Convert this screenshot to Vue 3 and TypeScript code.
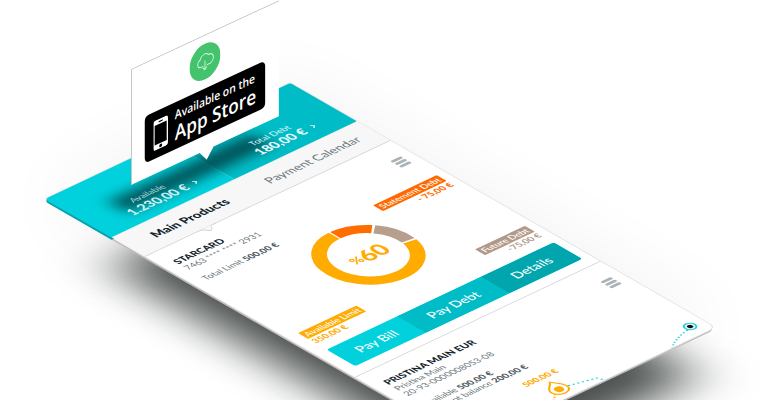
<script setup lang="ts">
interface Balance {
  label: string
  amount: string
}

interface Segment {
  start: number
  sweep: number
  tone: string
}

const balances: Balance[] = [
  { label: 'Available', amount: '1.230,00 €' },
  { label: 'Total Debt', amount: '180,00 €' },
]

// Angles in degrees, clockwise from the top of the ring
const segments: Segment[] = [
  { start: 1, sweep: 46, tone: 'statement' },
  { start: 50, sweep: 47, tone: 'future' },
  { start: 100, sweep: 259, tone: 'available' },
]
</script>

<template>
  <main class="stage">
    <div class="ground"><div class="ground-shadow"></div></div>
    <article class="screen">
      <header class="balances">
        <section v-for="b in balances" :key="b.label" class="balance">
          <span class="balance-label">{{ b.label }}</span>
          <div class="balance-row">
            <strong class="balance-amount">{{ b.amount }}</strong>
            <button class="chevron" type="button" :aria-label="b.label">
              <svg viewBox="0 0 6 10" width="6" height="10"><path d="M1.2 2.2 4 5 1.200 7.8" /></svg>
            </button>
          </div>
        </section>
        <div class="popup-shadow"></div>
      </header>

      <nav class="tabs">
        <button type="button" class="tab active">Main Products</button>
        <button type="button" class="tab">Payment Calendar</button>
        <svg class="notch" viewBox="0 0 26 9" width="26" height="9">
          <path class="notch-fill" d="M0 0V.5H5C9 .5 10 7.500 13 7.500S17 .5 21 .5H26V0Z" />
          <path class="notch-edge" d="M0 .5H5C9 .5 10 7.500 13 7.500S17 .5 21 .5H26" />
        </svg>
      </nav>

      <section class="product">
        <div class="summary">
          <div class="details">
            <h2>STARCARD</h2>
            <p>7463 **** **** 2931</p>
            <p class="spaced">Total Limit <b>500,00 €</b></p>
          </div>
          <button class="menu" type="button" aria-label="Menu"><i></i><i></i><i></i></button>
        </div>

        <div class="usage">
          <div class="figure figure-available">
            <span class="tag">Available Limit</span>
            <b>350,00 €</b>
          </div>
          <div class="donut">
            <svg viewBox="0 0 110 110" width="110" height="110">
              <circle
                v-for="s in segments"
                :key="s.tone"
                :class="s.tone"
                cx="55"
                cy="55"
                r="47"
                pathLength="360"
                :stroke-dasharray="`${s.sweep} ${360 - s.sweep}`"
                :transform="`rotate(${s.start - 90} 55 55)`"
              />
            </svg>
            <div class="percent"><small>%</small>60</div>
          </div>
          <div class="right-figures">
            <div class="figure figure-statement">
              <span class="tag">Statement Debt</span>
              <b>- 75,00 €</b>
            </div>
            <div class="figure figure-future">
              <span class="tag">Future Debt</span>
              <span>-75,00 €</span>
            </div>
          </div>
        </div>

        <div class="actions">
          <button type="button">Pay Bill</button>
          <button type="button">Pay Debt</button>
          <button type="button">Details</button>
        </div>
      </section>

      <section class="product account">
        <div class="summary">
          <div class="details">
            <h2>PRISTINA MAIN EUR</h2>
            <p>Pristina Main</p>
            <p>20-93-0000008053-08</p>
            <p class="spaced">Available <b>500,00 €</b></p>
            <p>Current balance <b>200,00 €</b></p>
          </div>
          <button class="menu" type="button" aria-label="Menu"><i></i><i></i><i></i></button>
        </div>
        <svg class="history" viewBox="0 0 320 62" width="320" height="62">
          <path class="dots past" d="M122 50 108 62" />
          <path class="dots" d="M142 47 172 55 175 62" />
          <path class="dots" d="M297 48 Q276 52 264 62" />
          <path class="pin" d="M133 31C136 36 141 39 141 46A10 9 0 1 1 121 46C121 39 130 36 133 31Z" />
          <circle class="pin-core" cx="131" cy="46" r="5" />
          <circle class="point" cx="303" cy="45" r="6" />
          <circle class="point-core" cx="303" cy="45" r="3" />
          <text x="110" y="23">500,00 €</text>
        </svg>
      </section>
    </article>

    <aside class="popup">
      <svg class="panel" viewBox="0 0 172 127" width="172" height="127">
        <path class="panel-fill" d="M0 0H172V116H96L88 126 80 116H0Z" />
        <path class="panel-edge" d="M.5 116V.5H172" />
      </svg>
      <svg class="download" viewBox="0 0 36 36" width="36" height="36">
        <circle cx="18" cy="18" r="18" />
        <path d="M16 22H13A4 4 0 0 1 12.500 14.200A5.300 5.300 0 0 1 22 12.500A4.700 4.700 0 0 1 24 22H20M18 17V26M15.500 23.500 18 26 20.500 23.500" />
      </svg>
      <a class="store" href="#">
        <svg viewBox="0 0 17 30" width="17" height="30">
          <rect width="17" height="30" rx="2.500" fill="#fff" />
          <rect x="1.500" y="5" width="14" height="19.500" fill="#000" />
          <rect x="6" y="2" width="5" height="1.200" rx=".6" fill="#000" />
          <circle cx="8.500" cy="27.200" r="1.700" fill="#000" />
        </svg>
        <span class="store-text">
          <span>Available on the</span>
          <strong>App Store</strong>
        </span>
      </a>
    </aside>
  </main>
</template>

<style>
body {
  margin: 0;
  background: #fff;
}
</style>

<style scoped>
.stage {
  position: relative;
  min-height: 100vh;
  overflow: hidden;
  background: #fff;
  font-family: Lato, 'Liberation Sans', sans-serif;
  font-size: 11px;
  line-height: 13px;
  color: #6b777c;
}

button {
  margin: 0;
  padding: 0;
  border: 0;
  background: none;
  font: inherit;
  color: inherit;
}

/* The phone screen and its shadow share one isometric plane */
.screen,
.ground {
  position: absolute;
  top: 199px;
  left: 45px;
  width: 320px;
  transform-origin: 0 0;
  transform: matrix(0.766, -0.3625, 0.717, 0.412, 0, 0);
}

.ground {
  height: 597px;
  box-shadow: 0 0 90px rgba(0, 0, 0, 0.06);
}

.ground-shadow {
  width: 284px;
  height: 515px;
  margin: 132px 0 0 -38px;
  background: #4a504e;
  filter: blur(29px);
}

.screen {
  border-radius: 4px 2px 8px 8px;
  background: #fff;
  box-shadow:
    0 0 0 1px #dedede,
    -1px 1px 0 #fff,
    -2px 2px 0 #b5adad,
    -3px 3px 0 #c9c2c2;
}

.balances {
  position: relative;
  display: grid;
  grid-template-columns: 1fr 1fr;
  height: 93px;
  border-radius: 4px 2px 0 0;
  color: #e4fafb;
  box-shadow:
    -1px 1px 0 #00b3bd,
    -2px 2px 0 #00a9b2,
    -3px 3px 0 #009fa8;
}

.balance {
  padding-top: 50px;
  text-align: center;
  background: #00d1dc;
  border-radius: 4px 0 0 0;
}

.balance + .balance {
  background: #00bcc6;
  border-radius: 0 2px 0 0;
}

/* Balance texts stay readable above the shadow of the callout */
.balance-label,
.balance-row {
  position: relative;
  z-index: 1;
}

.balance-label {
  display: block;
  color: #a9d5d8;
}

.balance + .balance .balance-label {
  color: #d5f4f6;
}

.balance-row {
  display: grid;
  grid-template-columns: 1fr auto 1fr;
  align-items: center;
  line-height: 18px;
}

.balance-amount {
  grid-column: 2;
  font-size: 16px;
  font-weight: 900;
  color: #cdeef0;
}

.balance + .balance .balance-amount {
  color: #e9fbfc;
}

.chevron {
  display: flex;
  padding-left: 8px;
}

.chevron path {
  fill: none;
  stroke: #d8f7f8;
  stroke-width: 1.5;
}

.popup-shadow {
  position: absolute;
  top: 43px;
  left: 42px;
  width: 188px;
  height: 28px;
  background: #00292c;
  opacity: 0.72;
  filter: blur(9px);
}

.tabs {
  position: relative;
  display: grid;
  grid-template-columns: 1fr 1fr;
  height: 47px;
  box-sizing: border-box;
  border-bottom: 1px solid #cfd1d3;
  background: #f7f7f8;
  font-size: 15px;
}

.tab.active {
  font-weight: 900;
  color: #14242b;
}

.notch {
  position: absolute;
  top: 46px;
  left: 67px;
}

.notch-fill {
  fill: #f7f7f8;
}

.notch-edge {
  fill: none;
  stroke: #cfd1d3;
}

.product {
  border-bottom: 1px solid #cfd1d3;
  padding: 20px 10px 14px 14px;
}

.summary {
  display: flex;
  justify-content: space-between;
  align-items: flex-start;
}

h2,
p {
  margin: 0;
}

h2 {
  font-size: 12px;
  line-height: 14px;
  font-weight: 900;
  color: #14242b;
}

.spaced {
  margin-top: 12px;
}

.details b {
  color: #4d5a60;
  font-weight: 900;
}

.menu {
  display: grid;
  justify-items: center;
  gap: 2px;
  margin-top: 7px;
  margin-right: 2px;
}

.menu i {
  width: 14px;
  height: 4px;
  border-radius: 2px;
  background: #a9b2b6;
}

.usage {
  display: grid;
  grid-template-columns: 1fr 110px 1fr;
  height: 150px;
  margin-top: 3px;
}

.figure {
  display: grid;
  justify-items: start;
  align-content: start;
}

.figure b {
  font-weight: 900;
}

.tag {
  padding: 0 3px;
  border-radius: 1px;
  line-height: 14px;
  font-weight: 500;
  color: #fff;
}

.figure-available {
  align-content: end;
  color: #ffab00;
}

.figure-available .tag {
  background: #ffab00;
}

.right-figures {
  display: grid;
  align-content: space-between;
}

.right-figures .figure {
  justify-items: end;
}

.figure-statement {
  color: #ff6a00;
}

.figure-statement .tag {
  background: #ff6a00;
}

.figure-future {
  color: #b29888;
  font-weight: 700;
}

.figure-future .tag {
  background: #b29888;
}

.donut {
  display: grid;
  align-self: start;
  place-items: center;
  margin-top: 8px;
}

.donut > * {
  grid-area: 1 / 1;
}

.donut circle {
  fill: none;
  stroke-width: 15;
}

.donut .available {
  stroke: #ffab00;
}

.donut .statement {
  stroke: #ff6d00;
}

.donut .future {
  stroke: #b89e8d;
}

.percent {
  display: flex;
  align-items: center;
  font-size: 27px;
  line-height: 30px;
  font-weight: 900;
  color: #ffab00;
}

.percent small {
  font-size: 16px;
}

.actions {
  display: grid;
  grid-template-columns: 92fr 109fr 95fr;
  margin-top: 13px;
  border-radius: 3px;
  overflow: hidden;
  font-size: 16px;
  line-height: 40px;
  font-weight: 500;
  color: #fff;
  background: #00d1dc;
}

.actions button:nth-child(2) {
  background: #00bcc6;
}

.actions button:nth-child(3) {
  background: #00a5ae;
}

.account {
  padding-bottom: 0;
  border-bottom: 0;
}

.history {
  display: block;
  margin-left: -14px;
}

.history text {
  font-size: 11px;
  font-weight: 900;
  fill: #ffab00;
}

.dots {
  fill: none;
  stroke: #22d3de;
  stroke-width: 2;
  stroke-dasharray: 2 3;
}

.past {
  stroke: #ffab00;
}

.pin,
.point {
  fill: #fff;
  stroke: #ffab00;
  stroke-width: 2;
}

.pin-core {
  fill: #ffab00;
}

.point {
  stroke: #22d3de;
}

.point-core {
  fill: #111;
}

/* The callout stands upright on the header */
.popup {
  position: absolute;
  top: 69px;
  left: 131px;
  width: 172px;
  height: 116px;
  display: flex;
  flex-direction: column;
  align-items: center;
  padding-top: 9px;
  box-sizing: border-box;
  transform-origin: 0 0;
  transform: matrix(0.86, -0.4, 0, 1, 0, 0);
}

.panel {
  position: absolute;
  top: 0;
  left: 0;
}

.panel-fill {
  fill: #fff;
}

.panel-edge {
  fill: none;
  stroke: #bdbdbd;
}

.download {
  position: relative;
}

.download circle {
  fill: #43c46c;
}

.download path {
  fill: none;
  stroke: #d8f5e1;
  stroke-width: 1;
}

.store {
  position: relative;
  display: flex;
  align-items: center;
  gap: 8px;
  width: 140px;
  height: 47px;
  margin-top: 9px;
  padding-left: 10px;
  box-sizing: border-box;
  border-radius: 5px;
  background: #000;
  color: #fff;
  text-decoration: none;
  font-family: 'Open Sans', 'Noto Sans', sans-serif;
}

.store-text {
  display: grid;
  font-size: 12px;
  line-height: 15px;
  font-weight: 600;
  white-space: nowrap;
}

.store-text strong {
  font-size: 20px;
  line-height: 22px;
  font-weight: 600;
}
</style>
